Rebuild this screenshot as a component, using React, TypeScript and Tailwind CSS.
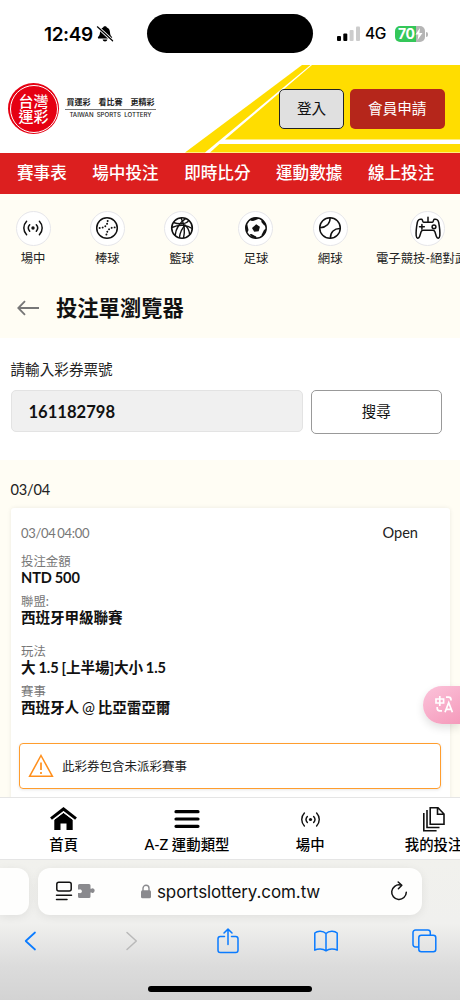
import React from 'react'

const SANS = "font-['Inter','Noto_Sans_CJK_TC',sans-serif]"
const LATO = "font-['Lato','Noto_Sans_CJK_TC',sans-serif]"

function StatusBar() {
  return (
    <div className="relative h-[65px] bg-white">
      <div className="flex items-center h-[68px] pl-[44px] pr-[32px]">
        <span className="w-[50px] text-[19px] font-semibold leading-none font-['Inter',sans-serif] tracking-[-0.4px]">12:49</span>
        <svg className="ml-[2px]" width="18" height="18" viewBox="0 0 18 18">
          <path d="M9 1.2c.9 0 1.6.5 1.9 1.3 2 .8 3 2.4 3.1 4.8.1 2.5.7 3.4 1.8 4.5.7.8.3 1.8-.7 1.8H2.9c-1 0-1.4-1-.7-1.8C3.3 10.7 3.9 9.8 4 7.3c.1-2.4 1.1-4 3.1-4.8.3-.8 1-1.3 1.9-1.3z" fill="#000" />
          <path d="M6.6 14.6h4.8c-.3 1.3-1.2 2-2.4 2s-2.1-.7-2.4-2z" fill="#000" />
          <path d="M1.8 2.1l14.6 13.5" stroke="#fff" strokeWidth="3" />
          <path d="M1.4 1.8l15.2 14" stroke="#000" strokeWidth="1.2" strokeLinecap="round" />
        </svg>
        <div className="ml-auto flex items-center">
          <svg className="-mr-[2px]" width="24" height="16" viewBox="0 0 24 16">
            <rect x="0" y="10" width="4" height="5" rx="1" fill="#000" />
            <rect x="6.3" y="7.5" width="4" height="7.5" rx="1" fill="#000" />
            <rect x="12.6" y="4" width="4" height="11" rx="1" fill="#ccc" />
            <rect x="19" y="0.5" width="4" height="14.5" rx="1" fill="#ccc" />
          </svg>
          <span className="ml-[6px] w-[30px] text-[15.5px] font-medium leading-none font-['Inter',sans-serif] tracking-[-0.4px]">4G</span>
          <div className="relative w-[30px] h-[16px] rounded-[5px] overflow-hidden bg-[linear-gradient(90deg,#34c759_70%,#b5b5b5_70%)]">
            <span className="absolute left-[3px] top-0 text-[14px] leading-[16px] font-bold text-white font-['Inter',sans-serif] tracking-[-0.3px]">70</span>
            <svg className="absolute left-[20px] top-[2px]" width="8" height="12" viewBox="0 0 8 12">
              <path d="M5 0L0.5 6.6h2.9L2.6 12l4.9-7H4.4z" fill="#fff" />
            </svg>
          </div>
          <div className="ml-[1px] w-[2px] h-[5px] rounded-r-full bg-[#b5b5b5]" />
        </div>
      </div>
      <div className="absolute left-[147px] top-[14px] w-[166px] h-[39px] rounded-full bg-black" />
    </div>
  )
}

function Header() {
  return (
    <header className="relative h-[87.5px] bg-white">
      <svg className="absolute inset-0" width="460" height="87.5" viewBox="0 0 460 87.5">
        <g fill="#ffdd00">
          <path d="M302 0h8.500L205 87.500h-20z" />
          <path d="M312 0H460v74.500H225z" />
          <path d="M219.500 79H460v8.500H210z" />
        </g>
      </svg>
      <div className="relative flex items-start pl-2 pr-[15.5px] pt-[18px]">
        <div className="w-[51px] h-[51px] rounded-full bg-[#e50012] p-[1.5px]">
          <div className="w-full h-full rounded-full border border-white flex items-center justify-center text-center text-white font-medium text-[15px] leading-[14.5px] font-['Noto_Sans_CJK_TC',sans-serif]">
            <p className="w-[30px] break-all">台灣運彩</p>
          </div>
        </div>
        <div className="ml-[6px] mt-[12px] w-[91px] text-[#222] font-['Noto_Sans_CJK_TC',sans-serif]">
          <div className="flex justify-between px-[1.5px] text-[8px] font-bold leading-[13px] border-b border-[#777] pb-[0.5px]">
            <span>買運彩</span>
            <span>看比賽</span>
            <span>更精彩</span>
          </div>
          <div className="text-center text-[6.1px] leading-[9px] font-medium whitespace-nowrap font-['Inter',sans-serif] [word-spacing:1.5px]">
            TAIWAN SPORTS LOTTERY
          </div>
        </div>
        <div className={`ml-auto mt-[6px] flex gap-[6px] text-[14.6px] ${LATO}`}>
          <button className="w-[65px] h-[40px] rounded-[5px] border border-[#222] bg-[#e0e0e0] text-[#111]">登入</button>
          <button className="w-[94.5px] h-[40px] rounded-[5px] bg-[#b5261b] text-white">會員申請</button>
        </div>
      </div>
    </header>
  )
}

const navItems = ['賽事表', '場中投注', '即時比分', '運動數據', '線上投注']

function LiveIcon({ size = 22 }: { size?: number }) {
  return (
    <svg width={size} height={size} viewBox="0 0 22 22" fill="none" stroke="#111" strokeWidth="1.5" strokeLinecap="round">
      <circle cx="11" cy="11" r="1.7" fill="#111" stroke="none" />
      <path d="M7.700 7.800c-1.700 1.900-1.700 4.500 0 6.400M14.300 7.800c1.700 1.900 1.700 4.500 0 6.400" />
      <path d="M4.600 4.300c-3.700 3.900-3.700 9.500 0 13.400M17.400 4.300c3.700 3.900 3.700 9.500 0 13.400" />
    </svg>
  )
}

function BaseballIcon() {
  return (
    <svg width="24" height="24" viewBox="0 0 24 24" fill="none" stroke="#111">
      <circle cx="12" cy="12" r="10.3" strokeWidth="1.5" />
      <g strokeWidth="1.9" strokeLinecap="round" strokeDasharray="0.1 2.9">
        <path d="M4.600 12c4.800 0 8-2.600 8.100-7.500" />
        <path d="M19.700 11.400c-4.700 0-8 2.800-8.400 8.200" />
      </g>
    </svg>
  )
}

function BasketballIcon() {
  return (
    <svg width="24" height="24" viewBox="0 0 24 24" fill="none" stroke="#111" strokeWidth="1.4">
      <circle cx="12" cy="12" r="10.3" strokeWidth="1.6" />
      <path d="M11 1.800c3.200 6 4.100 13.400 2.500 20.400" />
      <path d="M3.500 6.500c6 2.300 13.500 1.500 15.300-2.300M1.900 11.500c7-3.200 15.300-2.800 20.300 1" />
      <path d="M15.800 2.400C9.800 6.600 5.800 12.500 5.200 19.300M15.700 8.800c-4 3.700-5.800 7.900-6.300 13M14 8.600c3.500 2 5.300 6 5.600 10" />
    </svg>
  )
}

function SoccerIcon() {
  return (
    <svg width="24" height="24" viewBox="0 0 24 24">
      <circle cx="12" cy="12" r="10.2" fill="#fff" stroke="#111" strokeWidth="1.5" />
      <g fill="#111">
        <path d="M12.200 8.200l3.700 2.500-1.200 4.500-4.500.5-2.200-3.700z" />
        <path d="M7 2.900c2.300-1.400 5-1.700 6.300-1.100l1 1.300-5.300 2-2.200-.4z" />
        <path d="M17.600 3.600c2.300 1.600 3.600 3.600 4.200 5.500l-1.500.4-3-3.400z" />
        <path d="M1.600 9.800l1.700-1.400 1.200 5.600-1 2.500C1.900 14.300 1.500 12 1.600 9.800z" />
        <path d="M5.600 18.300l1.900-.4 4.700 2.600.3 1.800c-3 0-5.500-1.500-6.900-4z" />
        <path d="M22.300 12.900c-.2 3-1.700 5.600-4 7.300l-.8-1.300 2.600-5.100z" />
      </g>
    </svg>
  )
}

function TennisIcon() {
  return (
    <svg width="24" height="24" viewBox="0 0 24 24" fill="none" stroke="#111" strokeWidth="1.5">
      <circle cx="12" cy="12" r="10.3" />
      <path d="M2 11.800c6.500-.6 10.300-4.500 10.100-10M22 12.600c-5.600-.1-9.700 3.400-9.600 9.500" />
    </svg>
  )
}

function GamepadIcon() {
  return (
    <svg width="28" height="26" viewBox="0 0 28 26" fill="none" stroke="#111" strokeWidth="1.5" strokeLinecap="round" strokeLinejoin="round">
      <path d="M14 2.300v5M7.800 4.300c-2.500-.6-4 .7-4.500 3.200-.8 4.300-1.400 9.800-1.100 13.200.3 3 2.600 3.300 3.500.6l1.400-4.500c.4-1.200 1-1.600 2.200-1.600h9.400c1.200 0 1.800.4 2.200 1.600l1.400 4.500c.9 2.700 3.200 2.400 3.500-.6.3-3.400-.3-8.900-1.100-13.200-.5-2.500-2-3.800-4.500-3.200-1 .4-.6 3-1.800 3H9.600c-1.200 0-.8-2.600-1.800-3z" />
      <path d="M5.500 11.800h4.800M7.900 9.400v4.800" />
      <circle cx="20" cy="11.800" r="1.9" />
    </svg>
  )
}

const sports = [
  { label: '場中', icon: <LiveIcon /> },
  { label: '棒球', icon: <BaseballIcon /> },
  { label: '籃球', icon: <BasketballIcon /> },
  { label: '足球', icon: <SoccerIcon /> },
  { label: '網球', icon: <TennisIcon /> },
  { label: '電子競技-絕對武力', icon: <GamepadIcon /> },
]

function SportsNav() {
  return (
    <>
      <nav className={`flex gap-[25.5px] pl-[17px] h-[41px] bg-[#dc1f1f] text-white text-[16.6px] font-medium leading-[41px] whitespace-nowrap ${LATO}`}>
        {navItems.map((item) => (
          <span key={item}>{item}</span>
        ))}
      </nav>
      <div className="bg-[#fffdf4] h-[144px]">
        <div className="flex pl-[8.4px] pt-[17px] overflow-hidden">
          {sports.map((sport) => (
            <div key={sport.label} className="flex flex-col items-center shrink-0 min-w-[49.3px] mr-[25px] last:-ml-[4px]">
              <div className="w-[35px] h-[35px] rounded-full border border-[#e6e6ea] bg-white flex items-center justify-center">
                {sport.icon}
              </div>
              <span className={`mt-[4px] text-[12.4px] leading-[18px] text-[#222] whitespace-nowrap ${LATO}`}>{sport.label}</span>
            </div>
          ))}
        </div>
        <div className="flex items-center mt-[25px] pl-[17px]">
          <svg width="23" height="16" viewBox="0 0 23 16" fill="none" stroke="#777" strokeWidth="1.8">
            <path d="M22 8H1.500M8 1.200L1.300 8 8 14.800" />
          </svg>
          <h1 className={`ml-[16px] text-[21.3px] leading-[30px] font-bold text-[#111] ${LATO}`}>投注單瀏覽器</h1>
        </div>
      </div>
    </>
  )
}

function SearchForm() {
  return (
    <section className={`h-[122px] bg-white pt-[21px] pl-[10.5px] pr-[18.5px] ${LATO}`}>
      <label className="block text-[14.6px] leading-[21px] text-[#222]">請輸入彩券票號</label>
      <div className="flex mt-[10.5px] gap-2">
        <div className="w-[292.5px] h-[42px] rounded-[5px] border border-[#e3e3e3] bg-[#f0f0f0] pl-[17px] text-[16.6px] leading-[42px] font-bold text-[#111]">
          161182798
        </div>
        <button className="flex-1 h-[44px] rounded-[5px] border border-[#999] bg-white text-[14.5px] text-[#111]">搜尋</button>
      </div>
    </section>
  )
}

const details = [
  { label: '投注金額', value: 'NTD 500', gap: 'mt-[11.5px]' },
  { label: '聯盟:', value: '西班牙甲級聯賽', gap: 'mt-[9px]' },
  { label: '玩法', value: '大 1.5 [上半場]大小 1.5', gap: 'mt-[18px]' },
  {
    label: '賽事',
    value: (
      <>
        西班牙人 <span className="font-normal text-[15.5px] leading-none">@</span> 比亞雷亞爾
      </>
    ),
    gap: 'mt-[9px]',
  },
]

function Ticket() {
  return (
    <section className={`h-[337.5px] bg-[#fffdf4] px-[10.5px] pt-[20px] overflow-hidden ${LATO}`}>
      <div className="text-[14.6px] leading-[20px] text-[#222] tracking-[-0.2px]">03/04</div>
      <div className="mt-[8.5px] h-[300px] rounded-[3px] bg-white shadow-[0_0_4px_rgba(0,0,0,0.08)] px-[10.5px] pt-[15px]">
        <div className="flex justify-between items-center h-[20px] leading-[20px]">
          <span className="text-[13px] text-[#777] tracking-[-0.3px] [word-spacing:-1.3px]">03/04 04:00</span>
          <span className="mr-[21px] text-[14.6px] text-[#222]">Open</span>
        </div>
        {details.map((d) => (
          <div key={d.label} className={d.gap}>
            <div className="text-[12.4px] h-[15px] leading-[14.5px] text-[#777]">{d.label}</div>
            <div className="text-[14.6px] h-[16.5px] leading-[16.5px] font-bold text-[#111] tracking-[-0.1px] [word-spacing:-0.5px]">{d.value}</div>
          </div>
        ))}
        <div className="-mx-[2px] mt-[26px] h-[46.5px] rounded-[4px] border-[1.5px] border-[#ff9d2e] flex items-center pl-[8px] shadow-[0_1px_3px_rgba(0,0,0,0.1)]">
          <svg width="26" height="24" viewBox="0 0 25 24" fill="none" stroke="#ff8f1c">
            <path d="M12.500 1.500L23.900 22.300H1.100z" strokeWidth="1.5" />
            <path d="M12.500 8.500v7.500M12.500 18v2" strokeWidth="1.7" />
          </svg>
          <span className="ml-[8px] mt-[3px] text-[12.5px] text-[#222]">此彩券包含未派彩賽事</span>
        </div>
      </div>
    </section>
  )
}

function HomeIcon() {
  return (
    <svg width="27" height="24" viewBox="0 0 27 24">
      <path d="M1 11.600L13.500 2 26 11.600" fill="none" stroke="#000" strokeWidth="3" />
      <path d="M4.300 12.700l9.200-7 9.200 7V23h-6.200v-6.500h-6V23H4.300z" fill="#000" />
      <path d="M2.300 13.900l11.200-8.600 11.200 8.600" fill="none" stroke="#fff" strokeWidth="0.9" />
    </svg>
  )
}

function MenuIcon() {
  return (
    <svg width="26" height="20" viewBox="0 0 26 20" stroke="#000" strokeWidth="3.2" strokeLinecap="round">
      <path d="M2 2.700h22M2 10h22M2 17.300h22" />
    </svg>
  )
}

function BetsIcon() {
  return (
    <svg width="24" height="26" viewBox="0 0 24 26" fill="none" stroke="#111" strokeWidth="1.6">
      <path d="M8.200 1.800h7.800l6 6.200v10.200H8.200zM15.500 2v6.300h6.300" />
      <path d="M5 4v17.500h12.500M1.800 7v17.800h12.800" />
    </svg>
  )
}

const tabs = [
  { label: '首頁', icon: <HomeIcon /> },
  { label: 'A-Z 運動類型', icon: <MenuIcon /> },
  { label: '場中', icon: <LiveIcon size={21} /> },
  { label: '我的投注', icon: <BetsIcon /> },
]

function TabBar() {
  return (
    <nav className="flex h-[62.5px] border-y border-[#e5e5e5] bg-white pl-[2px] overflow-hidden">
      {tabs.map((tab) => (
        <div key={tab.label} className="w-[123.3px] shrink-0 flex flex-col items-center pt-[8px]">
          <div className="h-[26px] flex items-center">{tab.icon}</div>
          <span className={`mt-[1.5px] text-[14.4px] leading-[22px] font-medium text-black whitespace-nowrap ${LATO}`}>{tab.label}</span>
        </div>
      ))}
    </nav>
  )
}

function BrowserBar() {
  return (
    <footer className="relative h-[140.5px] overflow-hidden bg-[linear-gradient(180deg,#f1f1ed_0%,#f0f0ee_45%,#dcdcdc_75%,#d3d3d3_100%)]">
      <div className="flex gap-[9px] pt-[8px]">
        <div className="w-[29px] h-[47px] rounded-r-[12px] bg-[#fefefd] shadow-[0_2px_10px_rgba(0,0,0,0.07)]" />
        <div className="w-[384px] h-[47px] rounded-[12px] bg-[#fefefd] shadow-[0_2px_10px_rgba(0,0,0,0.07)] flex items-center pl-[17px] pr-[14px]">
          <svg width="18" height="20" viewBox="0 0 18 20" fill="none" stroke="#111" strokeWidth="1.5" strokeLinecap="round">
            <rect x="1.8" y="1.2" width="14.4" height="8.8" rx="2" />
            <path d="M1.500 14.300h15M1.500 18.600h10.500" />
          </svg>
          <svg className="ml-[4px]" width="18" height="16" viewBox="0 0 18 16" fill="#8a8a8e">
            <path d="M2.500 1h9.500a1.500 1.500 0 011.500 1.500v3.300h.8a2 2 0 013.200 2.200 2 2 0 01-3.200 1.600h-.8v3.900a1.500 1.500 0 01-1.500 1.500H2.500A1.500 1.500 0 011 13.500V10h1.300a1.900 1.900 0 100-3.500H1v-4A1.500 1.500 0 012.500 1z" />
          </svg>
          <svg className="ml-[45px]" width="12" height="15" viewBox="0 0 12 15">
            <rect x="1" y="6.3" width="10" height="8" rx="1.5" fill="#8a8a8e" />
            <path d="M3 7V4.300a3 3 0 016 0V7" fill="none" stroke="#8a8a8e" strokeWidth="1.4" />
          </svg>
          <span className={`ml-[5px] mt-[3px] w-[170px] text-[17px] whitespace-nowrap text-[#111] tracking-[-0.1px] ${SANS}`}>sportslottery.com.tw</span>
          <svg className="ml-auto" width="18" height="20" viewBox="0 0 18 20" fill="none" stroke="#111" strokeWidth="1.5" strokeLinecap="round" strokeLinejoin="round">
            <path d="M10.300 4A7.300 7.300 0 1016.300 11.300" />
            <path d="M8.200 1l3.600 3.200-3.400 3.600" />
          </svg>
        </div>
      </div>
      <div className="grid grid-cols-[60px_142px_52px_144px_52px] justify-items-center items-center h-[52px]">
        <svg width="13" height="20" viewBox="0 0 13 20" fill="none" stroke="#0a7bff" strokeWidth="1.7" strokeLinecap="round" strokeLinejoin="round">
          <path d="M11 1.500L1.700 10l9.300 8.500" />
        </svg>
        <svg width="13" height="20" viewBox="0 0 13 20" fill="none" stroke="#b9b9b9" strokeWidth="1.5" strokeLinecap="round" strokeLinejoin="round">
          <path d="M2 1.500l9.300 8.500L2 18.500" />
        </svg>
        <svg width="22" height="26" viewBox="0 0 22 26" fill="none" stroke="#0a7bff" strokeWidth="1.5" strokeLinecap="round" strokeLinejoin="round">
          <path d="M7.500 8.500H3.300A2.300 2.300 0 001 10.800v11.400a2.300 2.300 0 002.300 2.300h15.400a2.300 2.300 0 002.300-2.300V10.800a2.300 2.300 0 00-2.300-2.300h-4.200" />
          <path d="M11 16.500V1.200M7 5l4-3.900L15 5" />
        </svg>
        <svg width="26" height="22" viewBox="0 0 26 22" fill="none" stroke="#0a7bff" strokeWidth="1.5" strokeLinejoin="round">
          <path d="M13 3.500C10 .6 4.500.6 1.800 3v17.200c3-1.800 8-1.800 11.200.6 3.200-2.400 8.200-2.400 11.200-.6V3C21.500.6 16 .6 13 3.500zM13 3.500v17.300" />
        </svg>
        <svg width="25" height="24" viewBox="0 0 25 24" fill="none" stroke="#0a7bff" strokeWidth="1.5" strokeLinejoin="round">
          <path d="M6.800 18H3.500A2.500 2.500 0 011 15.500v-12A2.500 2.500 0 013.500 1h12.300a2.500 2.500 0 012.500 2.500v2.700" />
          <rect x="6.8" y="6.2" width="17" height="16.5" rx="2.5" />
        </svg>
      </div>
      <div className="absolute left-[148px] bottom-[8px] w-[164px] h-[6px] rounded-full bg-black" />
    </footer>
  )
}

function TranslateButton() {
  return (
    <button className="absolute left-[423px] top-[686px] w-[37px] h-[38px] rounded-l-full bg-[linear-gradient(150deg,#fbc3da,#f59abb)] shadow-[0_4px_8px_rgba(0,0,0,0.12)]">
      <svg className="absolute left-[12px] top-[9px]" width="19" height="19" viewBox="0 0 19 19" fill="none" stroke="#fff" strokeWidth="1.7">
        <path d="M1 4h7.600v4H1zM4.800 1v10" />
        <path d="M11 2.200h2.500a2.500 2.500 0 012.500 2.500v.8M2.200 12v1.300a2.500 2.500 0 002.500 2.500H7" />
        <path d="M10 17.300l3.700-9.600 3.700 9.600M11.300 14.300h4.800" />
      </svg>
    </button>
  )
}

export default function App() {
  return (
    <div className="relative w-[460px] h-[1000px] overflow-hidden bg-white text-black">
      <StatusBar />
      <Header />
      <SportsNav />
      <SearchForm />
      <Ticket />
      <TabBar />
      <BrowserBar />
      <TranslateButton />
    </div>
  )
}
